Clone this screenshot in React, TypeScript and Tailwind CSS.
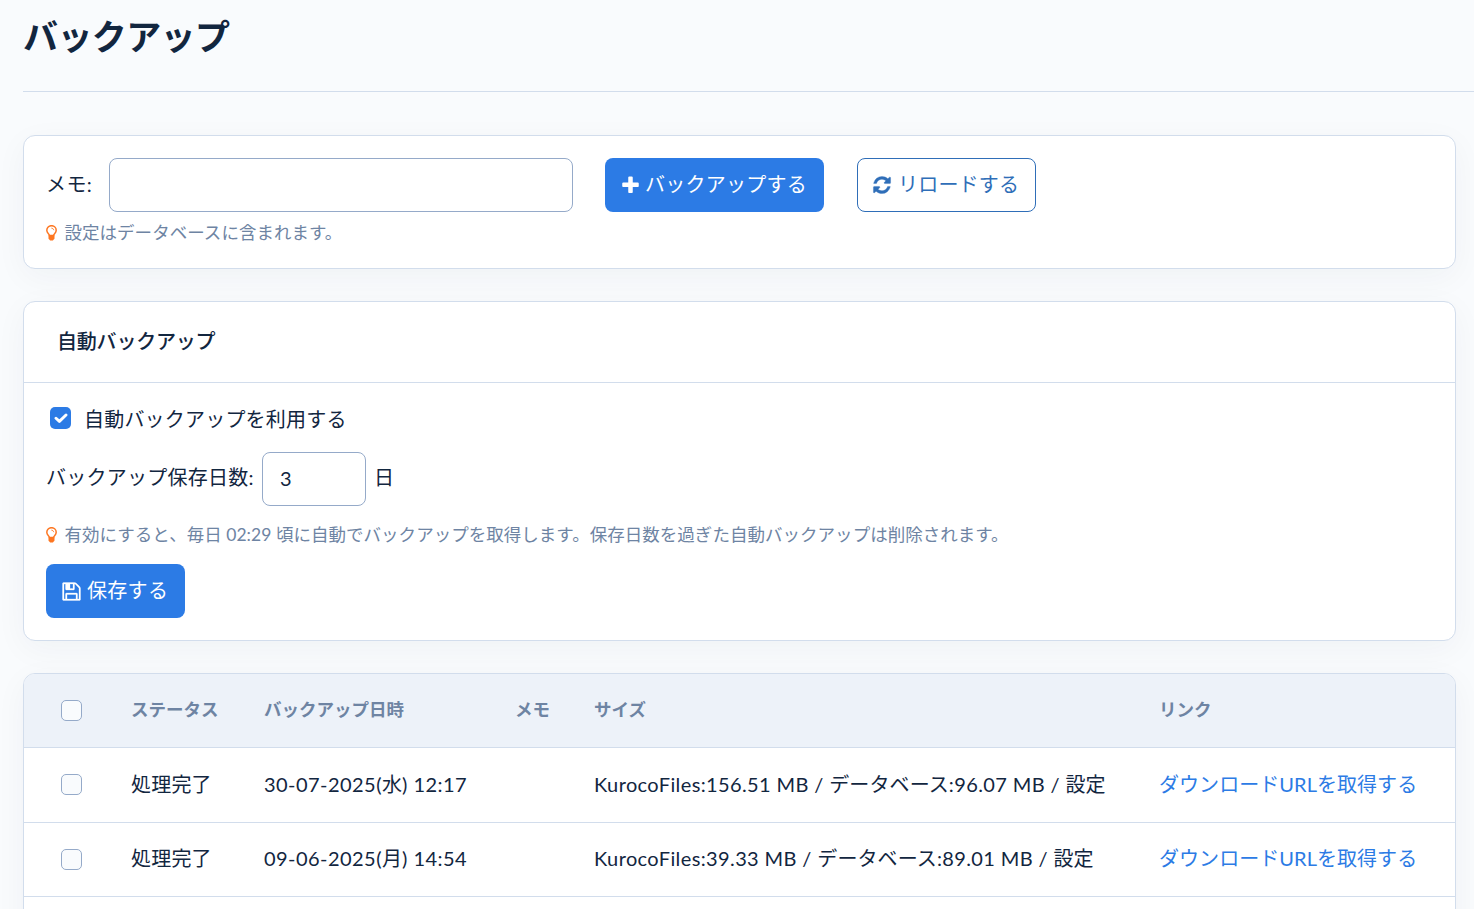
import { useState } from "react";
import type { ReactNode } from "react";

const rows = [
  {
    status: "処理完了",
    date: ["30-07-2025(", "水", ") 12:17"],
    size: ["KurocoFiles:156.51 MB / ", "データベース", ":96.07 MB / ", "設定"],
  },
  {
    status: "処理完了",
    date: ["09-06-2025(", "月", ") 14:54"],
    size: ["KurocoFiles:39.33 MB / ", "データベース", ":89.01 MB / ", "設定"],
  },
];

const columns = "grid grid-cols-[107px_133px_251px_79px_565px_1fr] items-center";

function PlusIcon() {
  return (
    <svg viewBox="0 0 1792 1792" className="h-[21px] w-[21px] shrink-0" fill="currentColor">
      <path d="M1600 736v192q0 40-28 68t-68 28h-416v416q0 40-28 68t-68 28h-192q-40 0-68-28t-28-68v-416h-416q-40 0-68-28t-28-68v-192q0-40 28-68t68-28h416v-416q0-40 28-68t68-28h192q40 0 68 28t28 68v416h416q40 0 68 28t28 68z" />
    </svg>
  );
}

function RefreshIcon() {
  return (
    <svg viewBox="0 0 1792 1792" className="h-5 w-5 shrink-0" fill="currentColor" stroke="currentColor" strokeWidth="30">
      <path d="M1639 1056q0 5-1 7-64 268-268 434.5t-478 166.5q-146 0-282.5-55t-243.5-157l-129 129q-19 19-45 19t-45-19-19-45v-448q0-26 19-45t45-19h448q26 0 45 19t19 45-19 45l-137 137q71 66 161 102t187 36q134 0 250-65t186-179q11-17 53-117 8-23 30-23h192q13 0 22.5 9.5t9.5 22.5zm25-800v448q0 26-19 45t-45 19h-448q-26 0-45-19t-19-45 19-45l138-138q-148-137-349-137-134 0-250 65t-186 179q-11 17-53 117-8 23-30 23h-199q-13 0-22.5-9.5t-9.5-22.5v-7q65-268 270-434.5t480-166.5q146 0 284 55.5t245 156.5l130-129q19-19 45-19t45 19 19 45z" />
    </svg>
  );
}

function SaveIcon() {
  return (
    <svg viewBox="0 0 1792 1792" className="h-[21px] w-[21px] shrink-0" fill="currentColor" stroke="currentColor" strokeWidth="25">
      <path d="M512 1536h768v-384h-768v384zm896 0h128v-896q0-14-10-38.5t-20-34.5l-281-281q-10-10-34-20t-39-10v416q0 40-28 68t-68 28h-576q-40 0-68-28t-28-68v-416h-128v1280h128v-416q0-40 28-68t68-28h832q40 0 68 28t28 68v416zm-384-928v-320q0-13-9.5-22.5t-22.5-9.5h-192q-13 0-22.5 9.5t-9.5 22.5v320q0 13 9.5 22.5t22.5 9.5h192q13 0 22.5-9.5t9.5-22.5zm640 32v928q0 40-28 68t-68 28h-1344q-40 0-68-28t-28-68v-1344q0-40 28-68t68-28h928q40 0 88 20t76 48l280 280q28 28 48 76t20 88z" />
    </svg>
  );
}

function BulbIcon() {
  return (
    <svg viewBox="0 0 11 16" className="h-4 w-[11px] shrink-0" fill="none">
      <path
        d="M3.5 10.4C3.3 8.8.8 8 .8 5.200a4.700 4.500 0 0 1 9.400 0C10.200 8 7.700 8.800 7.500 10.400z"
        stroke="#fd7621"
        strokeWidth="1.500"
      />
      <path d="M5.700 3.100q1.700 0 2 1.700" stroke="#fd7621" strokeWidth=".8" strokeLinecap="round" />
      <path d="M2.500 10h6v3.500q0 .8-.8.9-.5 1.200-2.200 1.200t-2.200-1.200q-.8-.1-.8-.9z" fill="#fd7621" />
    </svg>
  );
}

function Hint({ children }: { children: ReactNode }) {
  return (
    <p className="-ml-px flex h-6 items-center gap-2 pl-[0.500px] text-[17.500px] leading-6 tracking-[0.030px] text-[#6e84a3]">
      <BulbIcon />
      <span>{children}</span>
    </p>
  );
}

// even items are latin text, odd items are Japanese
function Mixed({ parts, latin }: { parts: string[]; latin: string }) {
  return (
    <span className="pb-0.5 whitespace-pre">
      {parts.map((part, i) => (
        <span key={i} className={i % 2 === 0 ? latin : ""}>
          {part}
        </span>
      ))}
    </span>
  );
}

function Box({ checked, onClick }: { checked?: boolean; onClick?: () => void }) {
  return (
    <button
      role="checkbox"
      aria-checked={!!checked}
      aria-label="選択"
      onClick={onClick}
      className={
        checked
          ? "flex h-[22px] w-[21px] items-center justify-center rounded-[5px] bg-[#2c7be5]"
          : "block h-[21px] w-[21px] rounded-[5px] border border-[#95aac9] bg-[#f9fbfd]"
      }
    >
      {checked && (
        <svg viewBox="0 0 14 12" className="h-3 w-3.5" fill="none">
          <path d="M2 6.200l3.400 3.200L12 3" stroke="#fff" strokeWidth="2.900" strokeLinecap="round" strokeLinejoin="round" />
        </svg>
      )}
    </button>
  );
}

export default function App() {
  const [auto, setAuto] = useState(true);
  const [memo, setMemo] = useState("");
  const [days, setDays] = useState("3");
  const [selected, setSelected] = useState<number[]>([]);

  const toggleRow = (i: number) =>
    setSelected(selected.includes(i) ? selected.filter((n) => n !== i) : [...selected, i]);
  const toggleAll = () => setSelected(selected.length === rows.length ? [] : rows.map((_, i) => i));

  return (
    <div
      lang="ja"
      className="h-[909px] overflow-hidden bg-[#f9fbfd] pl-[23px] font-[Lato,'Noto_Sans_CJK_JP',sans-serif] text-xl tracking-[0.100px] text-[#12263f]"
    >
      <header className="h-[92px] border-b border-[#d2ddec]">
        <h1 className="pt-[11px] text-[35px] leading-[50px] font-bold tracking-[-0.600px]">バックアップ</h1>
      </header>

      <main className="mt-[43px] mr-[18px] flex flex-col gap-8">
        <section className="h-[134px] rounded-xl border border-[#d2ddec] bg-white px-[22px] pt-[22px] shadow-[0_8px_32px_rgba(18,38,63,0.045)]">
          <div className="flex items-center">
            <label htmlFor="memo" className="w-[63px] pb-0.5 tracking-[0.400px]">メモ:</label>
            <input
              id="memo"
              value={memo}
              onChange={(e) => setMemo(e.target.value)}
              className="h-[54px] w-[464px] rounded-lg border border-[#95aac9] bg-white px-4 outline-none"
            />
            <button className="ml-8 flex h-[54px] w-[219px] items-center gap-1 rounded-lg bg-[#2c7be5] pl-[15px] tracking-[0.250px] text-white">
              <PlusIcon />
              <span className="pb-0.5">バックアップする</span>
            </button>
            <button className="ml-[33px] flex h-[54px] w-[179px] items-center gap-1.5 rounded-lg border border-[#2f6eb8] pl-3.5 tracking-[0.200px] text-[#2f6eb8]">
              <RefreshIcon />
              <span className="pb-0.5">リロードする</span>
            </button>
          </div>
          <div className="mt-[9px]">
            <Hint>設定はデータベースに含まれます。</Hint>
          </div>
        </section>

        <section className="h-[340px] rounded-xl border border-[#d2ddec] bg-white shadow-[0_8px_32px_rgba(18,38,63,0.045)]">
          <h2 className="flex h-[81px] items-center border-b border-[#d2ddec] pb-0.5 pl-[33px] font-medium tracking-[-0.200px]">
            自動バックアップ
          </h2>
          <div className="px-[22px] pt-[21px]">
            <div className="flex h-[30px] items-center gap-[13px] pl-1">
              <div className="pb-0.5">
                <Box checked={auto} onClick={() => setAuto(!auto)} />
              </div>
              <span className="tracking-[0.200px]">自動バックアップを利用する</span>
            </div>
            <div className="mt-[18px] flex items-center">
              <label htmlFor="days" className="w-[216px] pb-1 tracking-[0.250px]">バックアップ保存日数:</label>
              <input
                id="days"
                value={days}
                onChange={(e) => setDays(e.target.value)}
                className="h-[54px] w-[104px] rounded-lg border border-[#95aac9] bg-white px-[17px] pb-[3px] outline-none"
              />
              <span className="ml-2 pb-1">日</span>
            </div>
            <div className="mt-[17px]">
              <Hint>有効にすると、毎日 02:29 頃に自動でバックアップを取得します。保存日数を過ぎた自動バックアップは削除されます。</Hint>
            </div>
            <button className="mt-[17px] flex h-[54px] w-[139px] items-center gap-[5px] rounded-lg bg-[#2c7be5] pl-[15px] tracking-[0.300px] text-white">
              <SaveIcon />
              <span className="pb-0.5">保存する</span>
            </button>
          </div>
        </section>

        <section className="h-[300px] shrink-0 overflow-hidden rounded-xl border border-[#d2ddec] bg-white shadow-[0_8px_32px_rgba(18,38,63,0.045)]">
          <div className={`${columns} h-[74px] border-b border-[#d2ddec] bg-[#edf2f9] text-[17.500px] font-bold tracking-normal text-[#6e84a3]`}>
            <div className="pl-[37px]">
              <Box checked={selected.length === rows.length} onClick={toggleAll} />
            </div>
            <span>ステータス</span>
            <span>バックアップ日時</span>
            <span>メモ</span>
            <span>サイズ</span>
            <span>リンク</span>
          </div>
          {rows.map((row, i) => (
            <div key={i} className={`${columns} h-[74.500px] border-b border-[#d2ddec]`}>
              <div className="pl-[37px]">
                <Box checked={selected.includes(i)} onClick={() => toggleRow(i)} />
              </div>
              <span className="pb-0.5 tracking-[0.200px]">{row.status}</span>
              <Mixed parts={row.date} latin="tracking-[0.450px]" />
              <span />
              <Mixed parts={row.size} latin="tracking-[0.380px]" />
              <a href="#" className="pb-0.5 tracking-[0.050px] text-[#2c7be5]">ダウンロードURLを取得する</a>
            </div>
          ))}
        </section>
      </main>
    </div>
  );
}
